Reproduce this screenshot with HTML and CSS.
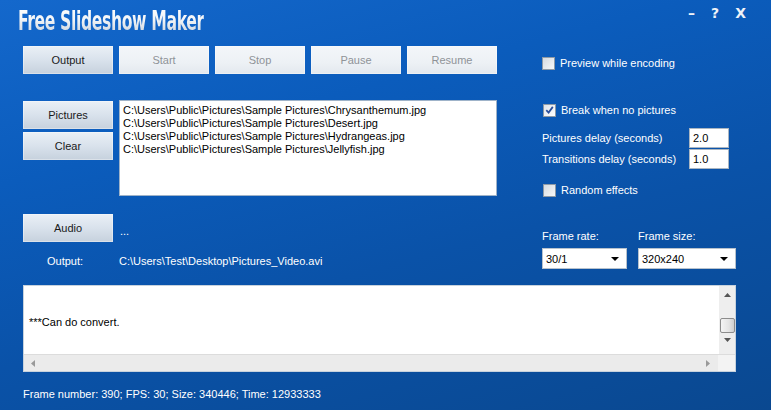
FILE: index.html
```html
<!DOCTYPE html>
<html>
<head>
<meta charset="utf-8">
<link rel="stylesheet" href="styles.css">
</head>
<body>
<div class="app">
  <header class="header">
    <h1 class="title">Free Slideshow Maker</h1>
    <div class="winctl">
      <span class="wc wc-min">–</span>
      <span class="wc">?</span>
      <span class="wc">X</span>
    </div>
  </header>

  <section class="row row1">
    <div class="left toolbar">
      <button class="btn">Output</button>
      <button class="btn disabled">Start</button>
      <button class="btn disabled">Stop</button>
      <button class="btn disabled">Pause</button>
      <button class="btn disabled">Resume</button>
    </div>
    <div class="right">
      <label class="check"><span class="box"></span>Preview while encoding</label>
    </div>
  </section>

  <section class="row row2">
    <div class="left pics">
      <div class="btncol">
        <button class="btn">Pictures</button>
        <button class="btn">Clear</button>
      </div>
      <div class="listbox">
        <div>C:\Users\Public\Pictures\Sample Pictures\Chrysanthemum.jpg</div>
        <div>C:\Users\Public\Pictures\Sample Pictures\Desert.jpg</div>
        <div>C:\Users\Public\Pictures\Sample Pictures\Hydrangeas.jpg</div>
        <div>C:\Users\Public\Pictures\Sample Pictures\Jellyfish.jpg</div>
      </div>
    </div>
    <div class="right opts">
      <label class="check"><span class="box checked"><svg viewBox="0 0 12 12" width="12" height="12"><path d="M2.5 6.2 L5 8.8 L9.6 2.6" fill="none" stroke="#2a4f9c" stroke-width="1.9"/></svg></span>Break when no pictures</label>
      <div class="delays">
        <div class="field"><span>Pictures delay (seconds)</span><span class="input">2.0</span></div>
        <div class="field"><span>Transitions delay (seconds)</span><span class="input">1.0</span></div>
      </div>
      <label class="check"><span class="box"></span>Random effects</label>
    </div>
  </section>

  <section class="row row3">
    <div class="left audio">
      <div class="audioline">
        <button class="btn">Audio</button>
        <span class="dots">...</span>
      </div>
      <div class="outline">
        <span class="outlabel">Output:</span>
        <span>C:\Users\Test\Desktop\Pictures_Video.avi</span>
      </div>
    </div>
    <div class="right frames">
      <div class="fcol fr">
        <span class="flabel">Frame rate:</span>
        <span class="select">30/1<svg class="arrow" viewBox="0 0 8 4" width="8" height="4"><path d="M0 0 H8 L4 4 Z" fill="#000"/></svg></span>
      </div>
      <div class="fcol fs">
        <span class="flabel">Frame size:</span>
        <span class="select">320x240<svg class="arrow" viewBox="0 0 8 4" width="8" height="4"><path d="M0 0 H8 L4 4 Z" fill="#000"/></svg></span>
      </div>
    </div>
  </section>

  <section class="log">
    <div class="logmain">
      <div class="logtext">***Can do convert.</div>
      <div class="vscroll">
        <svg class="sarrow" viewBox="0 0 7 4" width="7" height="4"><path d="M0 4 H7 L3.5 0 Z" fill="#555"/></svg>
        <span class="thumb"></span>
        <svg class="sarrow" viewBox="0 0 7 4" width="7" height="4"><path d="M0 0 H7 L3.5 4 Z" fill="#555"/></svg>
      </div>
    </div>
    <div class="hscroll">
      <svg viewBox="0 0 4 7" width="4" height="7"><path d="M4 0 V7 L0 3.5 Z" fill="#999"/></svg>
      <svg viewBox="0 0 4 7" width="4" height="7"><path d="M0 0 V7 L4 3.5 Z" fill="#999"/></svg>
      <span class="corner"></span>
    </div>
  </section>

  <footer class="status">Frame number: 390; FPS: 30; Size: 340446; Time: 12933333</footer>
</div>
</body>
</html>
```

FILE: styles.css
```css
* { box-sizing: border-box; }
html, body { margin: 0; padding: 0; }
body {
  width: 771px;
  height: 410px;
  overflow: hidden;
  font-family: "Liberation Sans", Arial, sans-serif;
  font-size: 11px;
  color: #fff;
  background: linear-gradient(165deg, #1468cc 0%, #0b5cbc 30%, #0a52a8 60%, #0a4890 100%);
}
.app {
  width: 771px;
  height: 410px;
  padding: 0 0 0 23px;
  display: flex;
  flex-direction: column;
}
.header {
  height: 46px;
  display: flex;
  justify-content: space-between;
  align-items: flex-start;
}
.title {
  margin: 5px 0 0 -5px;
  font-family: "DejaVu Sans Condensed", "DejaVu Sans", sans-serif;
  font-stretch: condensed;
  font-weight: bold;
  font-size: 27px;
  letter-spacing: -0.6px;
  line-height: 32px;
  white-space: nowrap;
  transform: scaleX(0.645);
  transform-origin: left top;
  background: linear-gradient(180deg, #ffffff 0%, #f2f5f8 45%, #c4ccd6 100%);
  -webkit-background-clip: text;
  background-clip: text;
  color: transparent;
}
.winctl {
  display: flex;
  gap: 16px;
  margin: 5px 25px 0 0;
  font-family: "DejaVu Sans", sans-serif;
  font-weight: bold;
  font-size: 14px;
  color: #eef2f8;
}
.row { display: flex; }
.left { width: 474px; }
.right { margin-left: 45px; width: 193px; }

.btn {
  width: 90px;
  height: 28px;
  padding: 0;
  border: none;
  font-family: "Liberation Sans", Arial, sans-serif;
  font-size: 11px;
  color: #1a1a1a;
  background: linear-gradient(180deg, #eaf0f6 0%, #d9e2ec 50%, #c6d1dd 100%);
  box-shadow: inset 0 0 0 1px rgba(255,255,255,0.35);
}
.btn.disabled {
  color: #8f9398;
  background: linear-gradient(180deg, #f3f6f9 0%, #edf1f5 60%, #e3e8ee 100%);
}
.toolbar { display: flex; gap: 6px; }

.check {
  display: flex;
  align-items: center;
  gap: 5px;
  height: 14px;
}
.box {
  width: 13px;
  height: 13px;
  border: 1px solid #8e9aa6;
  background: linear-gradient(135deg, #d6dbe0 0%, #f6f7f8 100%);
  display: inline-flex;
  align-items: center;
  justify-content: center;
}
.box.checked { background: linear-gradient(135deg, #dfe3e8 0%, #ffffff 100%); }
.row1 .right { padding-top: 10px; }

.row2 { margin-top: 26px; }
.pics { display: flex; gap: 6px; }
.btncol { display: flex; flex-direction: column; gap: 3px; padding-top: 1px; }
.listbox {
  width: 378px;
  height: 96px;
  background: #fff;
  border: 1px solid #9fb3c9;
  color: #000;
  padding: 3px 0 0 3px;
  line-height: 13px;
}
.opts { padding-top: 3px; display: flex; flex-direction: column; }
.opts .check { margin-left: 1px; }
.delays { margin-top: 11px; display: flex; flex-direction: column; gap: 1px; }
.field { display: flex; justify-content: space-between; align-items: center; height: 20px; padding-right: 6px; }
.input {
  width: 40px;
  height: 20px;
  background: #fff;
  color: #000;
  border: 1px solid #aab6c2;
  padding: 3px 0 0 3px;
  line-height: 13px;
}
.opts .check:last-child { margin-top: 14px; }

.row3 { margin-top: 17px; }
.audioline { display: flex; align-items: flex-end; gap: 7px; }
.dots { line-height: 12px; padding-bottom: 5px; }
.outline { display: flex; margin-top: 13px; line-height: 13px; }
.outlabel { width: 96px; padding-left: 24px; }
.frames { display: flex; gap: 11px; padding-top: 16px; }
.fcol { display: flex; flex-direction: column; gap: 5px; }
.flabel { line-height: 13px; }
.select {
  height: 21px;
  background: #fff;
  color: #000;
  border: 1px solid #b7c2cd;
  display: flex;
  align-items: center;
  justify-content: space-between;
  padding: 0 7px 0 3px;
}
.fr .select { width: 85px; }
.fs .select { width: 98px; }

.log {
  margin-top: 16px;
  width: 713px;
  height: 87px;
  background: #fff;
  border: 1px solid #c7d2dd;
  display: flex;
  flex-direction: column;
}
.logmain { flex: 1; display: flex; }
.logtext { flex: 1; color: #000; padding: 30px 0 0 5px; line-height: 13px; }
.vscroll {
  width: 16px;
  background: #eeeeee;
  display: flex;
  flex-direction: column;
  align-items: center;
  padding: 7px 0 6px;
}
.thumb {
  width: 15px;
  height: 15px;
  margin: 21px 0 5px;
  border: 1px solid #8c8c8c;
  border-radius: 2px;
  background: linear-gradient(90deg, #f4f4f4 0%, #e4e4e4 60%, #cfcfcf 100%);
}
.hscroll {
  height: 17px;
  background: #ebebeb;
  border-top: 1px solid #dcdcdc;
  display: flex;
  align-items: center;
  padding-left: 7px;
}
.hscroll svg:nth-child(2) { margin-left: auto; margin-right: 8px; }
.corner { width: 17px; height: 16px; background: #f3f3f3; }

.status { margin-top: 16px; line-height: 13px; }
```
